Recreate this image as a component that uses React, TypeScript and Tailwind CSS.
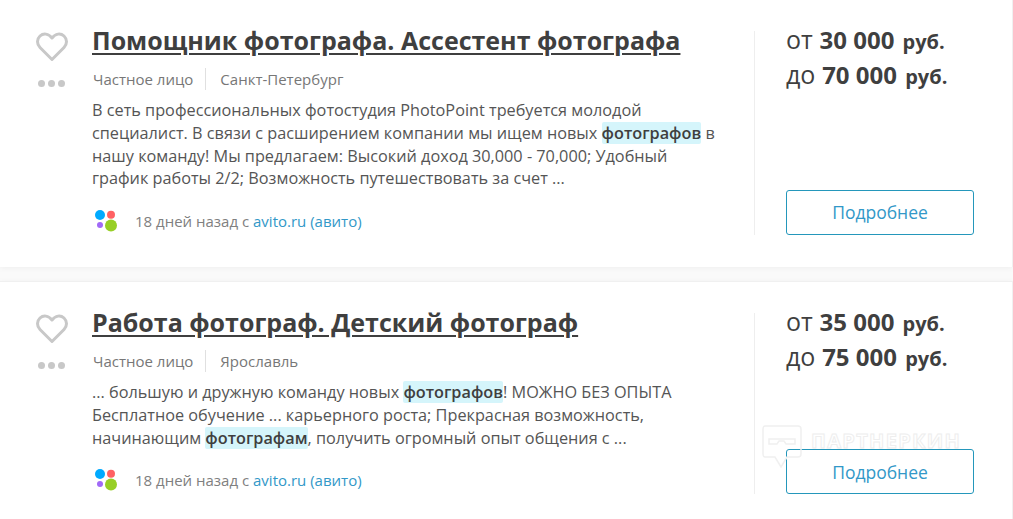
import React from 'react'

const font = { fontFamily: '"Open Sans", sans-serif' }

const Mark: React.FC<{ children: React.ReactNode }> = ({ children }) => (
  <span className="bg-[#d5f5fb] font-semibold text-[#3f3f3f] rounded-[2px]">{children}</span>
)

const Heart = () => (
  <svg width="32" height="30" viewBox="0 0 32 30" fill="none" stroke="#c8c8c8" strokeWidth="3">
    <path d="M16 27.500 4 15.500C0.600 12 0.800 7 4 4 7.300 1 12.500 1.300 16 6 19.500 1.300 24.700 1 28 4 31.200 7 31.400 12 28 15.500Z" strokeLinejoin="round" />
  </svg>
)

const AvitoLogo = () => (
  <svg width="24" height="24" viewBox="0 0 24 24" className="ml-[2px]">
    <circle cx="6" cy="6" r="5" fill="#0af" />
    <circle cx="17" cy="5.700" r="4" fill="#ff6163" />
    <circle cx="6" cy="16" r="3" fill="#a169f7" />
    <circle cx="17" cy="16.500" r="6" fill="#97cf26" />
  </svg>
)

const Salary: React.FC<{ prefix: string; value: string }> = ({ prefix, value }) => (
  <div className="h-[35px] leading-[35px]">
    <span className="text-[25px] font-normal leading-none">{prefix}</span>{' '}
    <span className="ml-[1.500px] text-[24px] font-bold leading-none">{value}</span>{' '}
    <span className="ml-[3px] leading-none">руб.</span>
  </div>
)

interface VacancyProps {
  title: string
  city: string
  from: string
  to: string
  text: React.ReactNode
}

const Vacancy: React.FC<VacancyProps> = ({ title, city, from, to, text }) => (
  <div className="flex bg-white border-t border-r border-[#f0f0f0] pt-[31px] pb-[32px] pr-[38px] shadow-[0_1px_6px_rgba(0,0,0,0.05)]">
    <div className="w-[92px] shrink-0 flex flex-col items-center pl-[11px] pt-[1px]">
      <Heart />
      <div className="flex gap-[3px] mt-[18px]">
        <span className="w-[7px] h-[7px] rounded-full bg-[#c8c8c8]" />
        <span className="w-[7px] h-[7px] rounded-full bg-[#c8c8c8]" />
        <span className="w-[7px] h-[7px] rounded-full bg-[#c8c8c8]" />
      </div>
    </div>
    <div className="w-[662px] shrink-0 pr-[40px] pb-[2px]">
      <a className="block text-[25px] leading-[20px] mt-[-1px] font-bold text-[#3f3f3f] underline underline-offset-[3px] whitespace-nowrap">
        {title}
      </a>
      <div className="flex items-center mt-[18px] h-[22px] text-[15px] text-[#777]">
        <span className="pl-[1px] pr-[12px] border-r border-[#e0e0e0] leading-[22px]">Частное лицо</span>
        <span className="pl-[14px]">{city}</span>
      </div>
      <div className="mt-[9px] text-[16.25px] leading-[22.75px] text-[#555] whitespace-nowrap">{text}</div>
      <div className="flex items-center mt-[19px] text-[15px] text-[#808080]">
        <AvitoLogo />
        <span className="ml-[17px]">
          18 дней назад с <a className="text-[#3298c8]">avito.ru (авито)</a>
        </span>
      </div>
    </div>
    <div className="flex-1 flex flex-col justify-between border-l border-[#eeeeee] pl-[31px]">
      <div className="text-[#3f3f3f] font-bold text-[20px] whitespace-nowrap mt-[-7px]">
        <Salary prefix="от" value={from} />
        <Salary prefix="до" value={to} />
      </div>
      <button className="h-[45px] w-[188px] border border-[#2497bb] rounded-[3px] text-[17.500px] text-[#3298c8]">
        Подробнее
      </button>
    </div>
  </div>
)

export default function App() {
  return (
    <div style={font} className="relative h-[519px] w-[1013px] overflow-hidden bg-[#fafafa]">
      <div className="flex flex-col gap-[14px] mt-[-1px]">
        <Vacancy
          title="Помощник фотографа. Ассестент фотографа"
          city="Санкт-Петербург"
          from="30 000"
          to="70 000"
          text={
            <>
              В сеть профессиональных фотостудия PhotoPoint требуется молодой
              <br />
              специалист. В связи с расширением компании мы ищем новых <Mark>фотографов</Mark> в
              <br />
              нашу команду! Мы предлагаем: Высокий доход 30,000 - 70,000; Удобный
              <br />
              график работы 2/2; Возможность путешествовать за счет ...
            </>
          }
        />
        <Vacancy
          title="Работа фотограф. Детский фотограф"
          city="Ярославль"
          from="35 000"
          to="75 000"
          text={
            <>
              ... большую и дружную команду новых <Mark>фотографов</Mark>! МОЖНО БЕЗ ОПЫТА
              <br />
              Бесплатное обучение ... карьерного роста; Прекрасная возможность,
              <br />
              начинающим <Mark>фотографам</Mark>, получить огромный опыт общения с ...
            </>
          }
        />
      </div>
      <div className="absolute left-[762px] top-[425px] flex items-start gap-[9px] text-[20px] leading-[18px] font-bold tracking-[1.300px] text-transparent [-webkit-text-stroke:1px_#eeeeee] pointer-events-none">
        <svg width="40" height="43" viewBox="0 0 40 43" fill="none" stroke="#f0f0f0" strokeWidth="1.500">
          <path d="M3 1H36Q39 1 39 4V29Q39 32 36 32H25L19 42 13 32H3Q1 32 1 29V4Q1 1 3 1Z" />
          <path d="M7 14H33V19H24L22 16H17L15 19H7Z" />
        </svg>
        <span className="mt-[7px]">ПАРТНЕРКИН</span>
      </div>
    </div>
  )
}
